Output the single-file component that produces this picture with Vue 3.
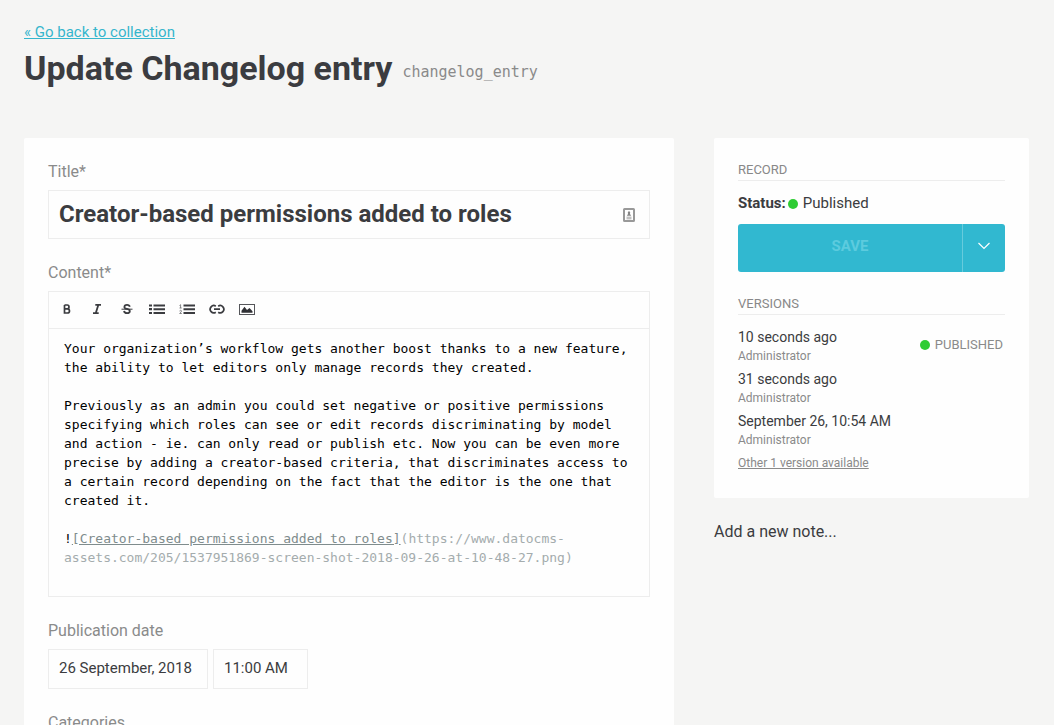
<script setup>
import { ref } from 'vue'

const title = ref('Creator-based permissions added to roles')
const date = ref('26 September, 2018')
const time = ref('11:00 AM')

const versions = [
  { when: '10 seconds ago', author: 'Administrator', published: true },
  { when: '31 seconds ago', author: 'Administrator', published: false },
  { when: 'September 26, 10:54 AM', author: 'Administrator', published: false }
]
</script>

<template>
  <div class="page">
    <header class="header">
      <a class="back" href="#">« Go back to collection</a>
      <div class="heading">
        <h1>Update Changelog entry</h1>
        <code>changelog_entry</code>
      </div>
    </header>

    <div class="columns">
      <main class="panel form">
        <div class="field">
          <label for="title">Title*</label>
          <div class="title-box">
            <input id="title" v-model="title" class="title-input" type="text" />
            <svg width="12" height="14" viewBox="0 0 12 14" aria-hidden="true">
              <rect x="1" y="1" width="10" height="12" rx="0.5" fill="#fff" stroke="#999" stroke-width="2" />
              <path d="M6 3 L7.200 4.200 L7 6 L8.200 7.800 H3.800 L5 6 L4.800 4.200 Z" fill="#858585" />
              <path d="M3.500 9.200 H8.500 M3.500 10.800 H8.500" stroke="#a6a6a6" stroke-width="1" />
            </svg>
          </div>
        </div>

        <div class="field">
          <label id="content-label">Content*</label>
          <div class="editor">
            <div class="toolbar" role="toolbar" aria-label="Formatting">
              <button type="button" aria-label="Bold">
                <svg width="16" height="16" viewBox="0 0 16 16">
                  <path d="M5.500 4 H8.200 Q10 4 10 5.900 Q10 7.800 8.200 7.800 H5.500 M8.200 7.800 Q10.500 7.800 10.500 9.900 Q10.500 12 8.200 12 H5.500 V4" fill="none" stroke="#3b3c40" stroke-width="1.700" />
                </svg>
              </button>
              <button type="button" aria-label="Italic">
                <svg width="16" height="16" viewBox="0 0 16 16">
                  <path d="M6.300 3.900 H12 M4 12.100 H9.700 M9.300 3.900 L6.800 12.100" fill="none" stroke="#3b3c40" stroke-width="1.800" />
                </svg>
              </button>
              <button type="button" aria-label="Strikethrough">
                <svg width="16" height="16" viewBox="0 0 16 16">
                  <path d="M10.800 5.800 Q10.400 3.900 8 3.900 Q5.400 3.900 5.400 5.900 Q5.400 7.400 8 7.900 Q10.800 8.400 10.800 10.200 Q10.800 12.100 8 12.100 Q5.400 12.100 5 10" fill="none" stroke="#3b3c40" stroke-width="1.800" />
                  <path d="M2.500 8.200 H13.500" stroke="#3b3c40" stroke-width="1" />
                </svg>
              </button>
              <button type="button" aria-label="Bulleted list">
                <svg width="16" height="16" viewBox="0 0 16 16">
                  <path d="M0 4.500 H3 M0 8.200 H3 M0 12 H3" stroke="#3b3c40" stroke-width="2.200" />
                  <path d="M4.500 4.500 H16 M4.500 8.200 H16 M4.500 12 H16" stroke="#3b3c40" stroke-width="2" />
                </svg>
              </button>
              <button type="button" aria-label="Numbered list">
                <svg width="16" height="16" viewBox="0 0 16 16">
                  <path d="M4.500 4.500 H16 M4.500 8.200 H16 M4.500 12 H16" stroke="#3b3c40" stroke-width="2" />
                  <path d="M0.500 4.500 L1.600 3.700 V7 M0.500 7 H2.700 M0.500 10 Q1.500 8.800 2.400 9.700 Q2.800 10.600 0.700 12.500 H2.800" fill="none" stroke="#66676a" stroke-width="0.800" />
                </svg>
              </button>
              <button type="button" aria-label="Link">
                <svg width="16" height="16" viewBox="0 0 16 16">
                  <path d="M6.800 11.200 A3.600 3.600 0 1 1 6.800 5.200 M9.200 5.200 A3.600 3.600 0 1 1 9.200 11.200 M5 8.200 H11" fill="none" stroke="#3b3c40" stroke-width="1.700" />
                </svg>
              </button>
              <button type="button" aria-label="Image">
                <svg width="16" height="16" viewBox="0 0 16 16">
                  <rect x="0.500" y="3.500" width="15" height="10" fill="#fff" stroke="#55565a" />
                  <path d="M2.500 11.800 V9.800 L5.500 5.800 L8 9 L10.500 7 L13.500 10.300 V11.800 Z" fill="#303135" />
                </svg>
              </button>
            </div>
            <div class="text" contenteditable="true" role="textbox" aria-multiline="true" aria-labelledby="content-label" spellcheck="false">
              <p>Your organization’s workflow gets another boost thanks to a new feature, the ability to let editors only manage records they created.</p>
              <p>Previously as an admin you could set negative or positive permissions specifying which roles can see or edit records discriminating by model and action - ie. can only read or publish etc. Now you can be even more precise by adding a creator-based criteria, that discriminates access to a certain record depending on the fact that the editor is the one that created it.</p>
              <p>!<span class="md-label">[Creator-based permissions added to roles]</span><span class="md-url">(https://www.datocms-assets.com/205/1537951869-screen-shot-2018-09-26-at-10-48-27.png)</span></p>
            </div>
          </div>
        </div>

        <div class="field">
          <label for="date">Publication date</label>
          <div class="date-row">
            <input id="date" v-model="date" class="date-input" type="text" />
            <input v-model="time" class="time-input" type="text" aria-label="Publication time" />
          </div>
        </div>

        <div class="field">
          <label for="categories">Categories</label>
          <input id="categories" class="date-input" type="text" />
        </div>
      </main>

      <aside>
        <div class="panel side">
          <section>
            <h2>Record</h2>
            <p class="status"><strong>Status:</strong><span class="dot"></span><span>Published</span></p>
            <div class="save">
              <button class="save-main" type="button" disabled>SAVE</button>
              <button class="save-more" type="button" aria-label="More actions">
                <svg width="14" height="8" viewBox="0 0 14 8">
                  <path d="M1.500 1 L7 6.500 L12.500 1" fill="none" stroke="#fff" stroke-width="1.200" />
                </svg>
              </button>
            </div>
          </section>
          <section>
            <h2>Versions</h2>
            <ul>
              <li v-for="version in versions" :key="version.when">
                <div>
                  <div class="when">{{ version.when }}</div>
                  <div class="author">{{ version.author }}</div>
                </div>
                <span v-if="version.published" class="tag"><span class="dot"></span>PUBLISHED</span>
              </li>
            </ul>
            <a class="more" href="#">Other 1 version available</a>
          </section>
        </div>
        <button class="note" type="button">Add a new note...</button>
      </aside>
    </div>
  </div>
</template>

<style>
html,
body {
  margin: 0;
  background: #f5f5f4;
}
body {
  overflow: hidden;
}
</style>

<style scoped>
.page {
  padding: 22px 25px 0 24px;
  font-family: Roboto, "Liberation Sans", sans-serif;
  font-size: 15px;
  line-height: 20px;
  color: #3b3c40;
}
.page * {
  box-sizing: border-box;
}
h1,
h2,
p,
ul {
  margin: 0;
  padding: 0;
}
button,
input {
  font: inherit;
  color: inherit;
  margin: 0;
  outline: none;
}
svg {
  display: block;
  flex: none;
}
.header {
  height: 116px;
}
.back {
  display: inline-block;
  color: #36b6cd;
}
.heading {
  display: flex;
  align-items: center;
  gap: 10px;
  margin-top: 4px;
}
h1 {
  font-size: 34px;
  line-height: 44px;
  font-weight: 700;
}
code {
  padding-top: 8px;
  font-family: "DejaVu Sans Mono", monospace;
  font-size: 15px;
  color: #8a8a8a;
}
.columns {
  display: grid;
  grid-template-columns: minmax(0, 1fr) 315px;
  gap: 40px;
  align-items: start;
}
.panel {
  background: #fefefe;
  padding: 24px;
  border-radius: 2px;
}
.field {
  margin-bottom: 24px;
}
label {
  display: block;
  margin-bottom: 8px;
  font-size: 16px;
  color: #8a8b8b;
}
.title-box {
  display: flex;
  align-items: center;
  height: 49px;
  padding: 0 14px 0 10px;
  border: 1px solid #ededed;
}
.title-input {
  flex: 1;
  min-width: 0;
  height: 44px;
  padding: 0 0 2px;
  border: 0;
  background: none;
  font-size: 24px;
  font-weight: 700;
}
.editor {
  border: 1px solid #ededed;
}
.toolbar {
  display: flex;
  height: 37px;
  padding: 0 3px;
  border-bottom: 1px solid #ededed;
}
.toolbar button {
  display: flex;
  align-items: center;
  justify-content: center;
  width: 30px;
  padding: 0 0 2px;
  border: 0;
  background: none;
}
.text {
  padding: 10px 16px 29px 15px;
  font-family: "DejaVu Sans Mono", monospace;
  font-size: 13px;
  line-height: 19px;
  color: #000;
  outline: none;
}
.text p + p {
  margin-top: 19px;
}
.md-label {
  color: #7f8c8d;
  text-decoration: underline;
}
.md-url {
  color: #a4acad;
}
.date-row {
  display: flex;
  gap: 5px;
}
.date-input,
.time-input {
  height: 40px;
  padding: 0 10px 2px;
  border: 1px solid #ededed;
  background: none;
}
.date-input {
  width: 160px;
}
.time-input {
  width: 95px;
}
.side section + section {
  margin-top: 24px;
}
h2 {
  height: 19px;
  border-bottom: 1px solid #ededed;
  font-size: 13px;
  line-height: 16px;
  font-weight: 400;
  text-transform: uppercase;
  color: #888;
}
.status {
  display: flex;
  align-items: center;
  margin: 12px 0 11px;
}
.dot {
  width: 10px;
  height: 10px;
  border-radius: 50%;
  background: #2ecc33;
}
.status .dot {
  margin: 1px 5px 0 2px;
}
.save {
  display: flex;
  height: 48px;
  border-radius: 3px;
  overflow: hidden;
  background: #31b8d0;
}
.save button {
  padding: 0 0 4px;
  border: 0;
  background: none;
}
.save .save-main {
  flex: 1;
  font-weight: 700;
  color: #5ccbde;
}
.save .save-more {
  display: flex;
  align-items: center;
  justify-content: center;
  width: 43px;
  border-left: 1px solid #67cbdc;
}
ul {
  padding-top: 11px;
  list-style: none;
}
li {
  display: flex;
  align-items: center;
  justify-content: space-between;
  margin-bottom: 4px;
}
.when {
  font-size: 14px;
  line-height: 22px;
}
.author,
.more {
  font-size: 12px;
  line-height: 16px;
  color: #8a8a8a;
}
.tag {
  display: flex;
  align-items: center;
  gap: 5px;
  margin-right: 2px;
  font-size: 13px;
  color: #8a8a8a;
}
.more {
  display: block;
  width: fit-content;
  margin-top: 5px;
  line-height: 21px;
}
.note {
  display: block;
  margin-top: 24px;
  padding: 0;
  border: 0;
  background: none;
  font-size: 16px;
}
</style>
